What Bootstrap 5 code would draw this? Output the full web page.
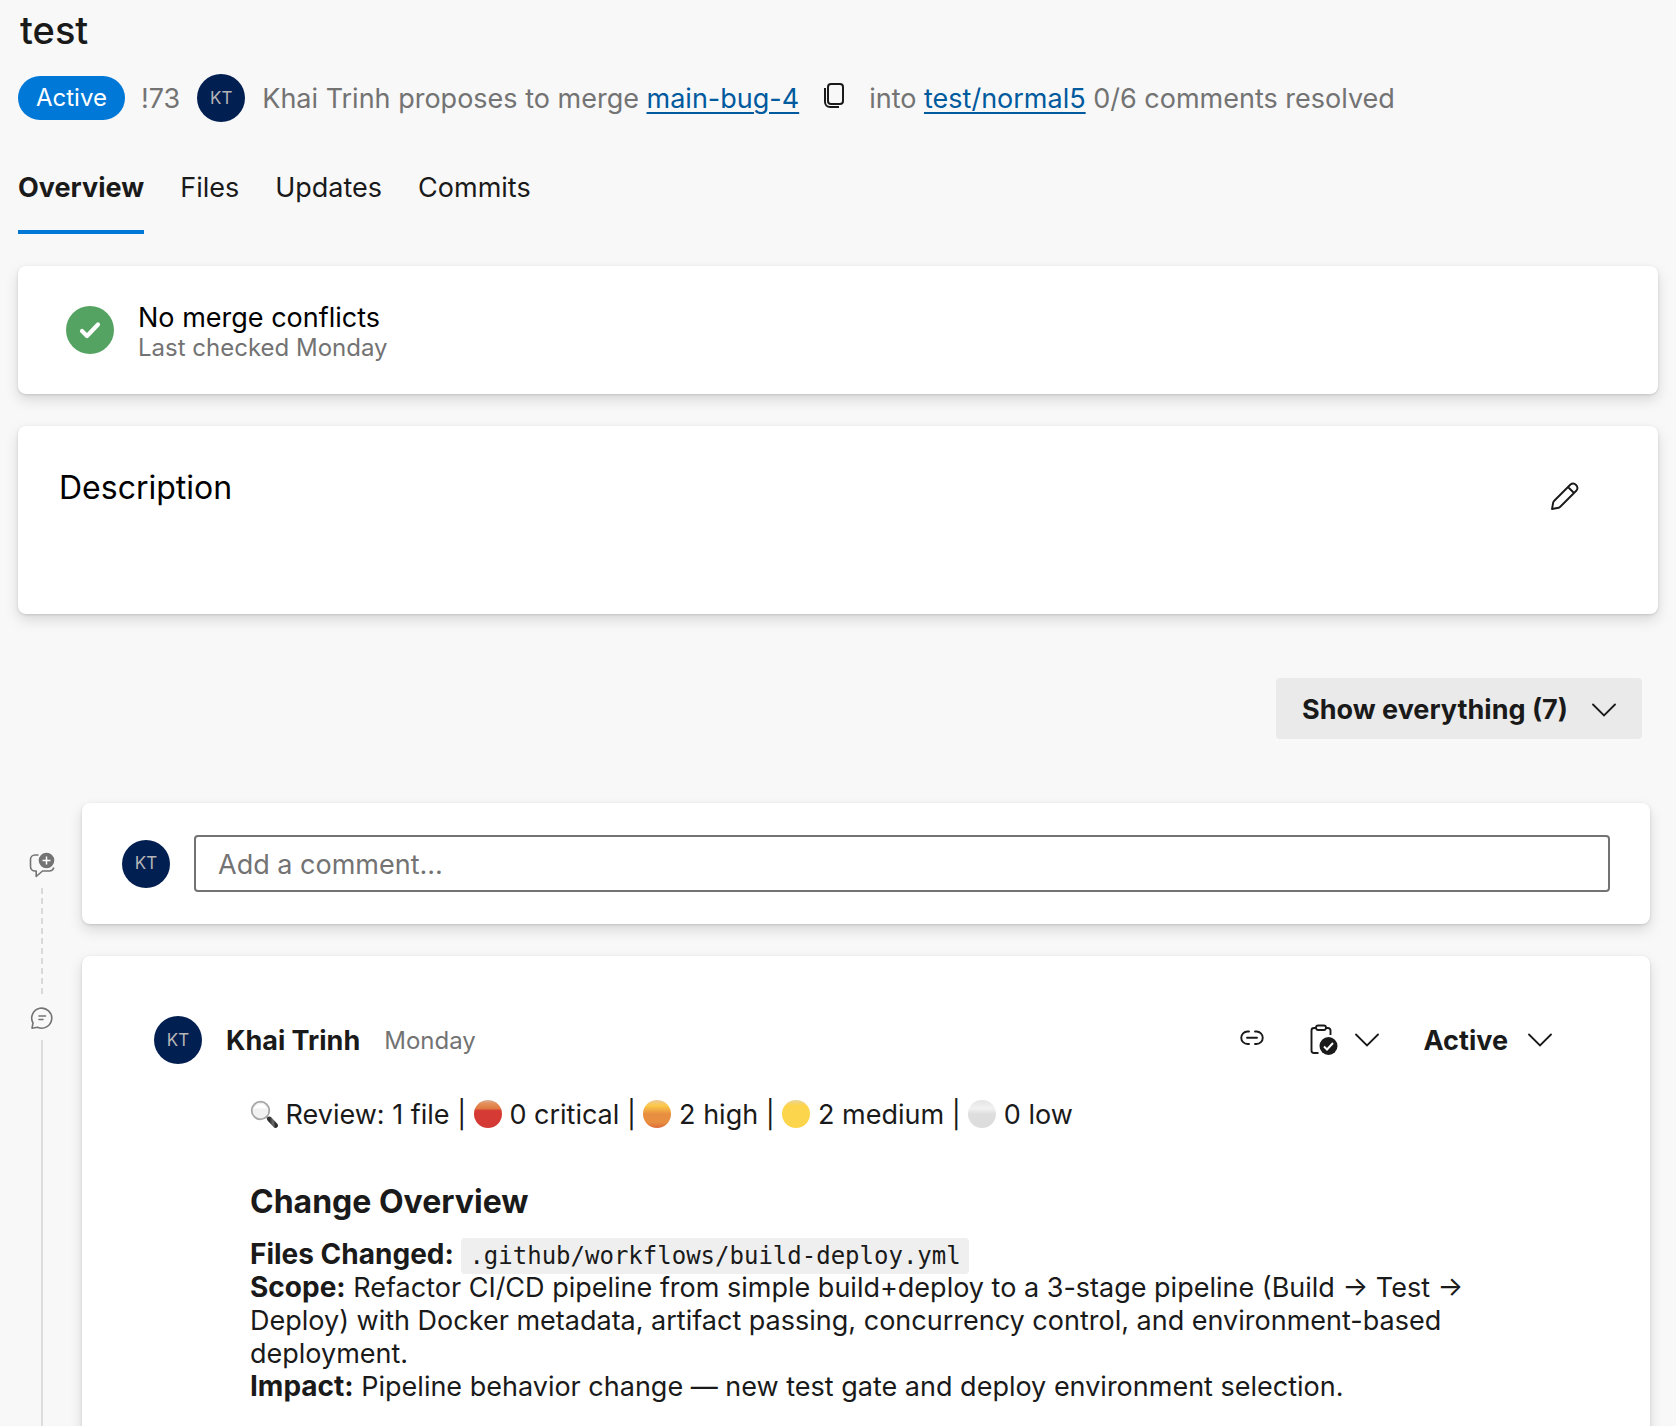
<!DOCTYPE html>
<html lang="en">
<head>
<meta charset="utf-8">
<meta name="viewport" content="width=device-width, initial-scale=1">
<title>Pull request 73: test</title>
<link href="https://cdn.jsdelivr.net/npm/bootstrap@5.3.0/dist/css/bootstrap.min.css" rel="stylesheet">
<style>
  body { background: #f8f8f8; color: #1a1a1a; font-family: Inter, "Noto Sans", sans-serif; font-size: 27px; line-height: 33px; }
  svg { display: block; flex: none; }
  .page-body { padding: 12px 18px 0; }
  .page-title { font-size: 38px; line-height: 36px; font-weight: 500; padding-left: 2px; margin-bottom: 26px; }
  .soft { color: #737373; }
  .pr-meta { height: 48px; }
  .state-pill { background: #0078d7; font-size: 24px; line-height: 24px; padding: 10px 18px; }
  .avatar { width: 48px; height: 48px; background: #021f52; color: #b5b5b5; font-size: 17px; flex: none; }
  .meta-avatar { margin: 0 17px; }
  .copy-btn { margin: 0 25px; }
  .branch-link { color: #005a9e; text-underline-offset: 4px; text-decoration-thickness: 2px; }
  .pr-tabs { gap: 36px; margin-top: 32px; }
  .pr-tabs .nav-link { color: #1a1a1a; padding: 17px 0 26px; border-bottom: 4px solid transparent; }
  .pr-tabs .nav-link.active { font-weight: 700; border-color: #0078d7; }
  .panel { background: #fff; border: 0; border-radius: 8px; box-shadow: 0 6px 14px rgba(0,0,0,.13), 0 1px 3px rgba(0,0,0,.13); }
  .merge-panel { margin-top: 32px; padding: 34px 48px; }
  .merge-title { line-height: 36px; color: #000; }
  .merge-sub { font-size: 24px; line-height: 24px; }
  .desc-panel { margin-top: 32px; min-height: 188px; padding: 40px 79px 40px 41px; }
  .section-title { font-size: 32px; line-height: 44px; color: #000; font-weight: 400; }
  .btn-plain { border: 0; background: none; padding: 0; color: #1a1a1a; display: flex; align-items: center; }
  .filter-btn { background: #eaeaea; border: 0; border-radius: 4px; color: #1a1a1a; font-size: 27px; line-height: 33px; font-weight: 700; padding: 15px 26px 13px; gap: 24px; margin: 64px 16px 64px 0; }
  .rail { width: 64px; flex: none; padding-left: 11px; }
  .rail-col { width: 26px; }
  .rail-dash { width: 2px; flex: 1; background: repeating-linear-gradient(#d9d9d9 0 6px, transparent 6px 10px); }
  .rail-line { width: 2px; flex: 1; background: #dcdcdc; }
  .thread-col { padding-right: 8px; }
  .rail-first { padding-top: 49px; padding-bottom: 8px; gap: 10px; margin-bottom: -48px; }
  .rail-second { padding-top: 50px; gap: 10px; }
  .comment-panel { padding: 32px 40px; margin-bottom: 32px; }
  .comment-box { border: 2px solid #737373; border-radius: 4px; height: 57px; font-size: 27px; padding: 8px 22px 6px; }
  .comment-box::placeholder { color: #737373; }
  .thread-panel { padding: 60px 98px 80px 72px; min-height: 472px; border-bottom-left-radius: 0; border-bottom-right-radius: 0; }
  .author { font-weight: 700; }
  .stamp { font-size: 24px; }
  .thread-tools { gap: 45px; }
  .state-btn { gap: 20px; font-size: 27px; font-weight: 700; }
  .thread-body { padding: 34px 0 0 96px; }
  .review-line { margin-bottom: 50px; }
  .dot { display: inline-block; vertical-align: -4px; }
  .change-title { font-size: 32px; line-height: 42px; font-weight: 700; margin-bottom: 15px; }
  .path-code { font-family: "DejaVu Sans Mono", monospace; font-size: 24px; line-height: 28px; color: #1a1a1a; background: #efefef; border-radius: 4px; padding: 4px 8px; }
  .thread-body b { font-size: 28px; font-weight: 700; }
</style>
</head>
<body>
<main class="page-body">
  <h1 class="page-title">test</h1>
  <div class="pr-meta d-flex align-items-center text-nowrap soft">
    <span class="state-pill rounded-pill text-white">Active</span>
    <span class="ms-3">!73</span>
    <span class="avatar meta-avatar rounded-circle d-flex align-items-center justify-content-center">KT</span>
    <span>Khai Trinh proposes to merge <a class="branch-link" href="#">main-bug-4</a></span>
    <button class="btn-plain copy-btn pb-1" type="button" aria-label="Copy branch name">
      <svg width="20" height="26" viewBox="0 0 20 26" fill="none" stroke="#1a1a1a" stroke-width="2"><rect x="4" y="1" width="15" height="20" rx="3"/><path d="M1 5v14a5 5 0 0 0 5 5h9"/></svg>
    </button>
    <span>into <a class="branch-link" href="#">test/normal5</a> 0/6 comments resolved</span>
  </div>

  <nav class="nav pr-tabs">
    <a class="nav-link active" href="#" aria-current="page">Overview</a>
    <a class="nav-link" href="#">Files</a>
    <a class="nav-link" href="#">Updates</a>
    <a class="nav-link" href="#">Commits</a>
  </nav>

  <section class="card panel merge-panel">
    <div class="d-flex align-items-center gap-4">
      <svg width="48" height="48" viewBox="0 0 48 48"><circle cx="24" cy="24" r="24" fill="#55a362"/><path d="M16 25l5 5L32 18.500" fill="none" stroke="#fff" stroke-width="4.200" stroke-linecap="round" stroke-linejoin="round"/></svg>
      <div>
        <div class="merge-title">No merge conflicts</div>
        <div class="merge-sub soft">Last checked Monday</div>
      </div>
    </div>
  </section>

  <section class="card panel desc-panel">
    <div class="d-flex justify-content-between align-items-start">
      <h2 class="section-title m-0">Description</h2>
      <button class="btn-plain pt-3" type="button" aria-label="Edit description">
        <svg width="28" height="28" viewBox="0 0 28 28" fill="none" stroke="#1a1a1a" stroke-width="1.900" stroke-linejoin="round"><path d="M1 27l1.200-6.500Q2.500 19.500 3.500 18.500L19.500 2.500a4.300 4.300 0 0 1 6 6L9.500 24.500Q8.500 25.500 7.500 25.800zM17 5l6 6"/></svg>
      </button>
    </div>
  </section>

  <div class="d-flex justify-content-end">
    <button class="btn filter-btn d-flex align-items-center" type="button">Show everything (7)
      <svg width="24" height="14" viewBox="0 0 24 14" fill="none" stroke="#1a1a1a" stroke-width="1.800" stroke-linecap="round"><path d="M1 1.500l11 11 11-11"/></svg>
    </button>
  </div>

  <div class="d-flex">
    <div class="rail d-flex">
      <div class="rail-col rail-first d-flex flex-column align-items-center">
        <svg width="26" height="26" viewBox="0 0 26 26"><path d="M9.500 3H6a4.500 4.500 0 0 0-4.500 4.500v7A4.500 4.500 0 0 0 6 19h1.200v5.500l6.300-5.500H20a4.800 4.800 0 0 0 4.800-3.500" fill="none" stroke="#737373" stroke-width="1.600" stroke-linejoin="round"/><circle cx="17.500" cy="8.500" r="7.800" fill="#737373"/><path d="M17.500 4.500v8M13.500 8.500h8" stroke="#fff" stroke-width="1.500"/></svg>
        <div class="rail-dash"></div>
      </div>
    </div>
    <section class="thread-col flex-grow-1">
      <div class="card panel comment-panel">
        <div class="d-flex align-items-center gap-4">
          <span class="avatar rounded-circle d-flex align-items-center justify-content-center">KT</span>
          <input class="form-control comment-box" type="text" placeholder="Add a comment..." aria-label="Add a comment">
        </div>
      </div>
    </section>
  </div>

  <div class="d-flex">
    <div class="rail d-flex">
      <div class="rail-col rail-second d-flex flex-column align-items-center">
        <svg width="24" height="24" viewBox="0 0 24 24" fill="none" stroke="#737373" stroke-width="1.600"><path d="M2 22.200L3 17A10 10 0 1 1 7.500 21.200z" stroke-linejoin="round"/><path d="M9 10h6.500M9 13.500h4" stroke-linecap="round"/></svg>
        <div class="rail-line"></div>
      </div>
    </div>
    <section class="thread-col flex-grow-1">
      <article class="card panel thread-panel">
        <header class="d-flex align-items-center">
          <span class="avatar rounded-circle d-flex align-items-center justify-content-center">KT</span>
          <strong class="author ms-4">Khai Trinh</strong>
          <span class="stamp soft ms-4">Monday</span>
          <div class="thread-tools d-flex align-items-center ms-auto">
            <button class="btn-plain pb-1" type="button" aria-label="Copy link">
              <svg width="24" height="16" viewBox="0 0 24 16" fill="none" stroke="#1a1a1a" stroke-width="1.900" stroke-linecap="round"><path d="M9 1.500H7.500a6.200 6.200 0 0 0 0 12.500H9M15 1.500h1.500a6.200 6.200 0 0 1 0 12.500H15M7 7.800h10"/></svg>
            </button>
            <button class="btn-plain gap-3" type="button" aria-label="Resolve options">
              <svg width="30" height="32" viewBox="0 0 30 32"><path d="M7 4H5a2.500 2.500 0 0 0-2.500 2.500v20A2.500 2.500 0 0 0 5 29h4.500M16 4h3a2.500 2.500 0 0 1 2.500 2.500V11" fill="none" stroke="#1a1a1a" stroke-width="1.900"/><rect x="7" y="1.500" width="10" height="4.500" rx="2.200" fill="none" stroke="#1a1a1a" stroke-width="1.800"/><circle cx="19.500" cy="22" r="9" fill="#1a1a1a"/><path d="M15 22.500l3 3 6-6.500" fill="none" stroke="#fff" stroke-width="2"/></svg>
              <svg width="24" height="14" viewBox="0 0 24 14" fill="none" stroke="#1a1a1a" stroke-width="1.800" stroke-linecap="round"><path d="M1 1.500l11 11 11-11"/></svg>
            </button>
            <button class="btn-plain state-btn" type="button">Active
              <svg width="24" height="14" viewBox="0 0 24 14" fill="none" stroke="#1a1a1a" stroke-width="1.800" stroke-linecap="round"><path d="M1 1.500l11 11 11-11"/></svg>
            </button>
          </div>
        </header>
        <div class="thread-body">
          <svg width="0" height="0" class="position-absolute" aria-hidden="true"><defs>
            <linearGradient id="gRed" x2="0" y2="1"><stop offset="0" stop-color="#d9b0a0"/><stop offset=".12" stop-color="#e3905a"/><stop offset=".3" stop-color="#e07a42"/><stop offset=".38" stop-color="#d63a35"/><stop offset="1" stop-color="#d43a35"/></linearGradient>
            <linearGradient id="gOrange" x2="0" y2="1"><stop offset="0" stop-color="#edc79a"/><stop offset=".2" stop-color="#fcca48"/><stop offset=".5" stop-color="#e88e40"/><stop offset=".8" stop-color="#e88e40"/><stop offset="1" stop-color="#dd6a38"/></linearGradient>
            <linearGradient id="gYellow" x2="0" y2="1"><stop offset="0" stop-color="#e8d59a"/><stop offset=".2" stop-color="#fdd54c"/><stop offset="1" stop-color="#fdd54c"/></linearGradient>
            <linearGradient id="gGrey" x2="0" y2="1"><stop offset="0" stop-color="#e4e4e4"/><stop offset=".3" stop-color="#f2f2f2"/><stop offset=".5" stop-color="#dedede"/><stop offset="1" stop-color="#dcdcdc"/></linearGradient>
            <linearGradient id="gHandle"><stop offset="0" stop-color="#2e2e2e"/><stop offset=".6" stop-color="#6e6e6e"/><stop offset="1" stop-color="#2e2e2e"/></linearGradient>
          </defs></svg>
          <p class="review-line"><svg class="dot" width="28" height="28" viewBox="0 0 28 28"><path d="M16.500 16.500l3.500 3.500" stroke="#8a8a8a" stroke-width="2.500"/><path d="M19.500 19l6 6.500" stroke="url(#gHandle)" stroke-width="4.800" stroke-linecap="round"/><circle cx="10.500" cy="10.500" r="8.800" fill="#f1f1f1" stroke="#a6a6a6" stroke-width="1.800"/><path d="M4 8.500a7 7 0 0 1 13 0z" fill="#fff"/></svg>
            Review: 1 file | <svg class="dot" width="28" height="28" viewBox="0 0 28 28"><circle cx="14" cy="14" r="14" fill="url(#gRed)"/></svg>
            0 critical | <svg class="dot" width="28" height="28" viewBox="0 0 28 28"><circle cx="14" cy="14" r="14" fill="url(#gOrange)"/></svg>
            2 high | <svg class="dot" width="28" height="28" viewBox="0 0 28 28"><circle cx="14" cy="14" r="14" fill="url(#gYellow)"/></svg>
            2 medium | <svg class="dot" width="28" height="28" viewBox="0 0 28 28"><circle cx="14" cy="14" r="14" fill="url(#gGrey)"/></svg>
            0 low</p>
          <h3 class="change-title">Change Overview</h3>
          <p class="m-0"><b>Files Changed:</b> <code class="path-code">.github/workflows/build-deploy.yml</code><br>
            <b>Scope:</b> Refactor CI/CD pipeline from simple build+deploy to a 3-stage pipeline (Build → Test → Deploy) with Docker metadata, artifact passing, concurrency control, and environment-based deployment.<br>
            <b>Impact:</b> Pipeline behavior change — new test gate and deploy environment selection.</p>
        </div>
      </article>
    </section>
  </div>
</main>
<script src="https://cdn.jsdelivr.net/npm/bootstrap@5.3.0/dist/js/bootstrap.bundle.min.js"></script>
</body>
</html>
